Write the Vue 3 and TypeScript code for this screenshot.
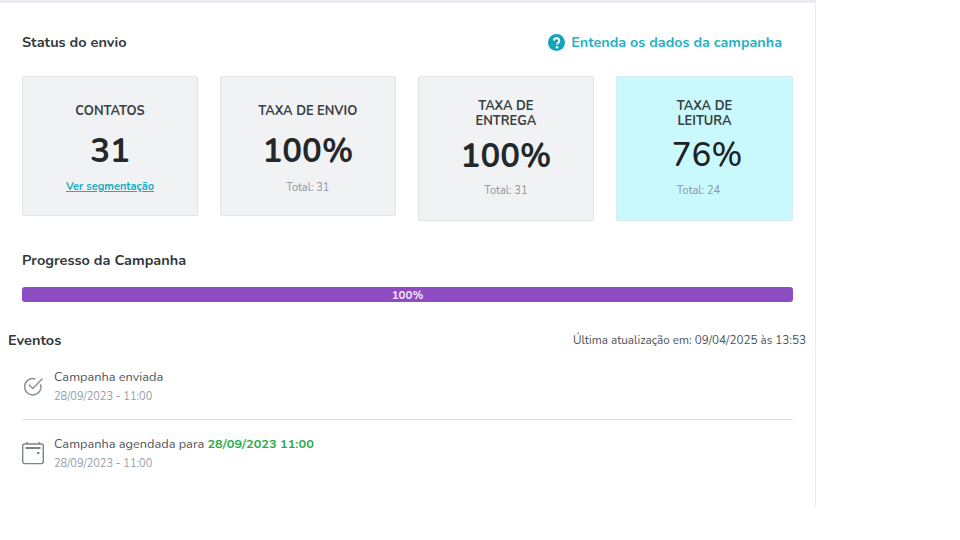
<script setup lang="ts">
interface Card { title: string; value: string; total?: string; link?: string; hl?: boolean; two?: boolean }
const cards: Card[] = [
  { title: 'CONTATOS', value: '31', link: 'Ver segmentação' },
  { title: 'TAXA DE ENVIO', value: '100%', total: 'Total: 31' },
  { title: 'TAXA DE\nENTREGA', value: '100%', total: 'Total: 31', two: true },
  { title: 'TAXA DE\nLEITURA', value: '76%', total: 'Total: 24', hl: true, two: true },
]
</script>

<template>
  <main class="panel">
    <section class="status">
      <header class="head">
        <h2 class="h">Status do envio</h2>
        <a class="help">
          <svg width="17" height="17" viewBox="0 0 24 24" aria-hidden="true">
            <circle cx="12" cy="12" r="12" fill="#12a5b8" />
            <path d="M8.2 9.2a3.9 3.9 0 0 1 7.7.6c0 2.6-3.1 2.7-3.1 4.9" fill="none" stroke="#fff" stroke-width="2.8" />
            <circle cx="12.7" cy="18.6" r="1.8" fill="#fff" />
          </svg>
          Entenda os dados da campanha
        </a>
      </header>
      <div class="cards">
        <article v-for="c in cards" :key="c.title" class="card" :class="{ hl: c.hl, two: c.two }">
          <div class="title">{{ c.title }}</div>
          <div class="value">{{ c.value }}</div>
          <a v-if="c.link" class="link">{{ c.link }}</a>
          <div v-else class="total">{{ c.total }}</div>
        </article>
      </div>
      <h2 class="h prog">Progresso da Campanha</h2>
      <div class="bar">100%</div>
    </section>
    <section class="events">
      <header class="ev-head">
        <h2 class="h">Eventos</h2>
        <span class="updated">Última atualização em: 09/04/2025 às 13:53</span>
      </header>
      <div class="row first">
        <svg class="ico" width="22" height="22" viewBox="0 0 22 22" fill="none" stroke="#8a8f94" stroke-width="1.4">
          <path d="M18.6 9.2A8.2 8.2 0 1 1 13.4 4" />
          <path d="M7.2 10l3.6 3.6L20 4" stroke-linecap="round" stroke-linejoin="round" />
        </svg>
        <div>
          <div class="ev-t">Campanha enviada</div>
          <div class="ev-d">28/09/2023 - 11:00</div>
        </div>
      </div>
      <div class="row second">
        <svg class="ico" width="22" height="24" viewBox="0 0 22 24" fill="none" stroke="#7d8388" stroke-width="1.4">
          <rect x="0.7" y="3" width="20.6" height="19.6" rx="2" />
          <path d="M5 1v2M17 1v2" />
          <path d="M3.5 7h15" stroke-width="2" />
          <rect x="15" y="11" width="2.4" height="2" fill="#7d8388" stroke="none" />
        </svg>
        <div>
          <div class="ev-t">Campanha agendada para <b class="green">28/09/2023 11:00</b></div>
          <div class="ev-d">28/09/2023 - 11:00</div>
        </div>
      </div>
    </section>
  </main>
</template>

<style>
body { background: #fff; }
</style>

<style scoped>
.panel {
  box-sizing: border-box;
  width: 816px;
  height: 507px;
  border-top: 3px solid #eaecef;
  border-right: 1px solid #eaecef;
  font-family: "Nunito", "Lato", "Open Sans", sans-serif;
  color: #333a40;
  background: #fff;
}
.status { padding: 28px 22px 0; }
.head { display: flex; justify-content: space-between; align-items: center; height: 22px; padding-right: 11px; }
.h { margin: 0; font-size: 14.5px; font-weight: 700; line-height: 22px; color: #33383d; }
.help { display: flex; align-items: center; gap: 6px; font-size: 14.35px; font-weight: 700; color: #23b2c3; }
.cards { display: grid; grid-template-columns: 176px 176px 176.6px 177px; column-gap: 21.8px; align-items: start; margin-top: 23px; }
.card {
  box-sizing: border-box;
  height: 140px;
  padding-top: 27px;
  display: flex;
  flex-direction: column;
  align-items: center;
  background: #f0f2f4;
  border: 1px solid #e3e5e8;
  border-radius: 2px;
  text-align: center;
}
.card.two { height: 145px; padding-top: 22px; }
.hl { background: #c9f9fc; border-color: #d4eef0; }
.title { font-size: 12.85px; font-weight: 700; line-height: 15px; color: #3a3f44; white-space: pre-line; }
.value { font-size: 33px; font-weight: 700; line-height: 40px; margin-top: 13px; color: #24282b; }
.two .value { margin-top: 8px; }
.hl .value { font-weight: 500; font-size: 33px; color: #1d2124; margin-left: 5px; margin-top: 7px; }
.link { margin-top: 7px; font-size: 11px; font-weight: 700; line-height: 16px; color: #22adbf; text-decoration: underline; }
.total { margin-top: 8px; font-size: 11px; line-height: 16px; color: #8d949c; }
.two .total { margin-top: 6px; }
.hl .total { margin-right: 12px; margin-top: 7px; }
.prog { margin-top: 28px; }
.bar {
  margin-top: 16px;
  height: 15px;
  width: 771px;
  border-radius: 3px;
  background: #8e4cc2;
  color: #f1e6f8;
  font-size: 11.5px;
  font-weight: 700;
  line-height: 16px;
  text-align: center;
}
.events { padding: 0 9px 0 8px; margin-top: 27px; }
.ev-head { display: flex; justify-content: space-between; align-items: center; height: 22px; }
.updated { font-size: 11.7px; color: #4c5257; }
.row { display: flex; align-items: center; gap: 10px; margin: 0 14px; width: 771px; }
.first { margin-top: 17px; border-bottom: 1px solid #dcdee0; padding-bottom: 14px; height: 37px; }
.second { margin-top: 15px; }
.ico { flex: none; margin-bottom: 2px; }
.ev-t { font-size: 12.75px; line-height: 18px; color: #4f5459; }
.ev-d { font-size: 11px; line-height: 18px; margin-top: 2px; color: #989da2; }
.green { color: #2bab4a; font-weight: 700; }
</style>
